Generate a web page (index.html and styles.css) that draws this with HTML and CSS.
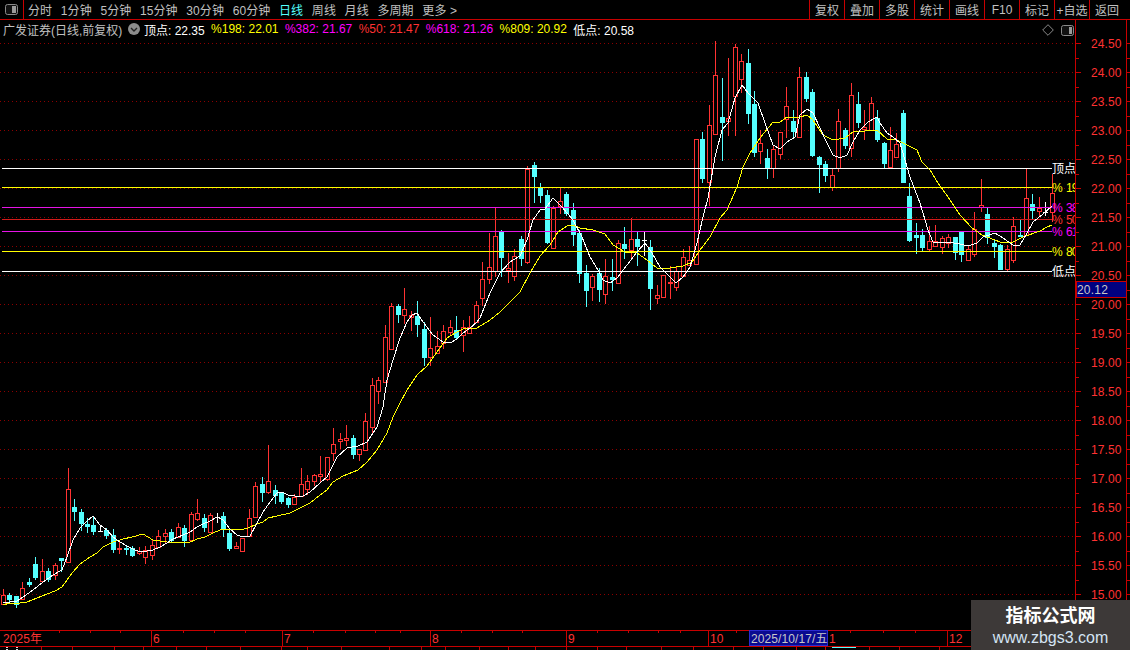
FILE: index.html
```html
<!DOCTYPE html>
<html lang="zh-CN">
<head>
<meta charset="utf-8">
<title>广发证券 日线</title>
<link rel="stylesheet" href="styles.css">
</head>
<body>
<div class="app">
  <header class="toolbar">
    <div class="panel-toggle">
      <svg class="toggle-icon" viewBox="0 0 13 11"><rect class="toggle-frame" x="0.5" y="0.5" width="12" height="10" rx="2"/><rect class="toggle-fill" x="7" y="2" width="4" height="7"/></svg>
    </div>
    <nav class="periods">
      <span class="period">分时</span>
      <span class="period">1分钟</span>
      <span class="period">5分钟</span>
      <span class="period">15分钟</span>
      <span class="period">30分钟</span>
      <span class="period">60分钟</span>
      <span class="period active">日线</span>
      <span class="period">周线</span>
      <span class="period">月线</span>
      <span class="period">多周期</span>
      <span class="period">更多 &gt;</span>
    </nav>
    <nav class="actions">
      <span class="action">复权</span>
      <span class="action">叠加</span>
      <span class="action">多股</span>
      <span class="action">统计</span>
      <span class="action">画线</span>
      <span class="action">F10</span>
      <span class="action">标记</span>
      <span class="action">+自选</span>
      <span class="action">返回</span>
    </nav>
  </header>

  <main class="stage">
    <svg id="chart" class="chart" width="1130" height="627" viewBox="0 20 1130 627"></svg>

    <div class="info">
      <span class="stock">广发证券(日线,前复权)</span>
      <svg class="drop" viewBox="0 0 12 12"><circle class="drop-disc" cx="6" cy="6" r="6"/><path class="drop-mark" d="M3 5l3 3 3-3"/></svg>
      <span class="stat white">顶点: 22.35</span>
      <span class="stat yellow">%198: 22.01</span>
      <span class="stat magenta">%382: 21.67</span>
      <span class="stat red">%50: 21.47</span>
      <span class="stat magenta">%618: 21.26</span>
      <span class="stat yellow">%809: 20.92</span>
      <span class="stat white">低点: 20.58</span>
    </div>

    <div class="corner">
      <svg class="diamond" viewBox="0 0 12 12"><path d="M6 .7L11.3 6 6 11.3.7 6z"/></svg>
      <svg class="toggle-icon" viewBox="0 0 13 11"><rect class="toggle-frame" x="0.5" y="0.5" width="12" height="10" rx="2"/><rect class="toggle-fill" x="8" y="2" width="3" height="7"/></svg>
    </div>

    <aside class="mark">
      <div class="mark-title">指标公式网</div>
      <div class="mark-url">www.zbgs3.com</div>
    </aside>
  </main>

  <footer id="tabs" class="tabs"></footer>
</div>
<script src="chart.js"></script>
</body>
</html>
```

FILE: styles.css
```css
* { box-sizing: border-box; }
html, body { margin: 0; padding: 0; background: #000; }
body { font-family: "Liberation Sans", "Noto Sans CJK SC", sans-serif; font-size: 12px; color: #c0c0c0; }
.app { width: 1130px; height: 650px; display: flex; flex-direction: column; overflow: hidden; background: #000; }

.toolbar { height: 20px; flex: none; display: flex; align-items: stretch; border-bottom: 1px solid #c80000; }
.panel-toggle { width: 24px; flex: none; display: flex; align-items: center; padding-left: 5px; border-right: 1px solid #c80000; }
.toggle-icon { width: 13px; height: 11px; display: block; }
.toggle-frame { fill: #111; stroke: #8a8a8a; }
.toggle-fill { fill: #9a9a9a; }
.periods { display: flex; align-items: center; padding-left: 4px; white-space: nowrap; }
.period { margin-right: 8.6px; letter-spacing: .1px; }
.period.active { color: #54ffff; }
.actions { margin-left: auto; padding-right: 6px; display: flex; }
.action { width: 35px; border-left: 1px solid #c80000; display: flex; align-items: center; justify-content: center; white-space: nowrap; }

.stage { position: relative; height: 627px; flex: none; }
.chart { display: block; }
.chart text { font-family: "Liberation Sans", "Noto Sans CJK SC", sans-serif; font-size: 12px; }

.grid { stroke: #8c0000; stroke-width: 1; stroke-dasharray: 1 3; }
.rule { stroke: #c80000; stroke-width: 1; }
.wick-up { stroke: #ff3232; }
.wick-down { stroke: #54ffff; }
.wick-flat { stroke: #fff; }
.body-up { fill: #000; stroke: #ff3232; }
.body-down { fill: #54ffff; stroke: #54ffff; }
.ma { fill: none; stroke-width: 1; shape-rendering: crispEdges; }
.ma-fast { stroke: #fff; }
.ma-slow { stroke: #ffff00; }
.fib { stroke-width: 1; }
.stroke-white { stroke: #fff; }
.stroke-yellow { stroke: #ffff00; }
.stroke-magenta { stroke: #e614e6; }
.stroke-red { stroke: #d01c1c; }
.chart .label-white { fill: #fff; }
.chart .label-yellow { fill: #ffff00; letter-spacing: -1px; word-spacing: 2px; }
.chart .label-magenta { fill: #ff00ff; letter-spacing: -1px; word-spacing: 2px; }
.chart .label-red { fill: #ff3232; letter-spacing: -1px; word-spacing: 2px; }
.axis-back { fill: #000; }
.chart .axis-text { fill: #ff3232; letter-spacing: .1px; }
.last-box { fill: #000080; stroke: #c80000; }
.chart .last-text { fill: #c8c8c8; letter-spacing: .2px; }
.date-box { fill: #0a0a90; stroke: #2a2ad0; }
.chart .date-text { fill: #c8c8c8; letter-spacing: .1px; }

.info { position: absolute; left: 3px; top: 0; height: 18px; display: flex; align-items: center; white-space: nowrap; }
.stock { color: #c0c0c0; width: 125px; }
.drop { width: 12px; height: 12px; flex: none; margin-right: 4px; }
.drop-disc { fill: #8c8c8c; }
.drop-mark { fill: none; stroke: #222; stroke-width: 1.4; }
.stat { margin-right: 6.4px; }
.white { color: #fff; }
.yellow { color: #ffff00; }
.magenta { color: #ff00ff; }
.red { color: #ff3232; }

.corner { position: absolute; left: 1042px; top: 4px; display: flex; align-items: center; gap: 7px; }
.diamond { width: 12px; height: 12px; display: block; }
.diamond path { fill: none; stroke: #8a8a8a; }

.mark { position: absolute; left: 971px; top: 580px; width: 159px; height: 50px; background: #3d3938; text-align: center; z-index: 2; }
.mark-title { color: #fff; font-size: 18px; font-weight: 700; line-height: 24px; margin-top: 4px; }
.mark-url { color: #d4e4f4; font-size: 16px; line-height: 19px; }

.tabs { height: 3px; flex: none; display: flex; overflow: hidden; border-top: 0; }
.tab { flex: none; height: 3px; border-right: 1px solid #c80000; overflow: hidden; }
.tab span { display: block; margin-top: -1px; height: 3px; width: 12px; margin-left: 6px; border-left: 2px dotted #ddd; border-right: 2px dotted #ddd; }
.tab.lit span { width: 24px; border: 0; border-top: 2px solid #54ffff; }
```

FILE: chart.js
```js
// Daily bars as [high, bodyTop, bodyBottom, low, type] in pixel rows of the price scale.
// type: u = up (hollow red), d = down (solid cyan), f = flat (white cross)
var bars = [
[589,595,604,604,'u'],[593,595,599,603,'d'],[596,596,604,607,'d'],[582,588,599,599,'u'],[578,582,584,586,'d'],
[557,564,577,579,'d'],[559,571,581,581,'u'],[568,571,579,581,'d'],[563,565,575,579,'u'],[558,558,560,571,'d'],
[468,489,562,562,'u'],[499,507,511,520,'d'],[509,512,523,530,'d'],[518,524,526,532,'d'],[516,525,531,534,'d'],
[526,531,531,531,'f'],[528,530,535,538,'d'],[529,535,549,552,'d'],[542,548,549,553,'u'],[545,548,549,554,'d'],
[546,548,555,556,'d'],[547,551,553,554,'u'],[546,550,557,563,'u'],[540,545,555,559,'u'],[530,536,547,547,'u'],
[529,533,536,542,'u'],[529,532,540,541,'d'],[523,527,537,537,'u'],[525,528,540,546,'d'],[512,514,540,540,'u'],
[499,513,519,520,'u'],[514,518,527,531,'d'],[513,515,532,532,'u'],[513,517,517,522,'f'],[512,516,528,536,'d'],
[529,533,548,550,'d'],[542,546,548,548,'u'],[538,538,551,551,'u'],[509,518,536,536,'u'],[482,486,517,517,'u'],
[477,484,492,501,'d'],[445,481,492,493,'u'],[485,490,495,503,'d'],[492,493,501,503,'d'],[497,498,504,507,'d'],
[494,497,504,504,'u'],[468,484,496,496,'u'],[475,481,489,494,'u'],[474,475,481,485,'u'],[456,474,476,482,'u'],
[457,457,479,480,'u'],[428,444,453,460,'u'],[433,439,441,448,'u'],[425,438,440,445,'u'],[435,438,454,458,'d'],
[449,449,454,460,'u'],[413,421,450,450,'u'],[378,385,427,432,'u'],[377,380,391,403,'u'],[325,337,382,382,'u'],
[303,306,349,349,'u'],[304,306,314,322,'d'],[288,309,315,323,'u'],[311,315,317,330,'u'],[301,316,324,336,'d'],
[322,329,357,365,'d'],[317,348,357,365,'u'],[331,346,353,353,'u'],[325,331,343,348,'u'],[320,327,332,334,'u'],
[316,330,337,339,'d'],[320,327,335,351,'u'],[316,327,333,333,'u'],[301,305,322,322,'u'],[262,279,298,305,'u'],
[233,267,279,283,'u'],[208,236,271,276,'u'],[230,232,257,276,'d'],[253,268,270,282,'u'],[249,256,276,280,'u'],
[236,239,258,265,'d'],[166,169,262,263,'u'],[162,165,176,202,'d'],[183,187,195,202,'d'],[190,195,242,243,'d'],
[206,208,248,248,'u'],[188,201,206,213,'u'],[192,194,213,215,'d'],[203,210,234,245,'d'],[230,233,273,282,'d'],
[265,273,290,306,'d'],[274,276,287,300,'u'],[268,273,289,301,'d'],[259,276,294,303,'u'],[259,277,279,290,'d'],
[240,243,283,283,'u'],[227,244,248,258,'d'],[218,239,250,258,'u'],[232,239,246,265,'d'],[232,240,240,255,'f'],
[240,247,288,309,'d'],[285,295,298,303,'u'],[275,275,297,297,'u'],[266,282,283,298,'u'],[266,271,287,290,'u'],
[249,257,276,276,'u'],[246,260,265,265,'u'],[139,139,264,264,'u'],[132,139,178,182,'d'],[105,125,182,205,'u'],
[41,75,134,134,'u'],[78,117,122,160,'d'],[58,118,121,135,'u'],[44,47,96,135,'u'],[54,61,79,92,'u'],
[49,63,113,123,'d'],[91,104,152,156,'d'],[130,143,151,163,'u'],[149,158,168,178,'d'],[146,149,168,177,'u'],
[132,132,154,158,'u'],[87,106,119,137,'u'],[110,121,131,137,'d'],[67,77,137,137,'u'],[72,77,98,101,'d'],
[89,92,155,156,'d'],[156,157,164,192,'d'],[161,164,175,181,'d'],[169,175,187,190,'u'],[109,121,168,171,'u'],
[128,130,145,148,'d'],[83,95,148,156,'u'],[92,104,122,127,'d'],[110,127,129,139,'u'],[97,103,130,130,'u'],
[110,118,139,141,'d'],[142,143,163,168,'d'],[127,150,167,167,'u'],[133,144,157,157,'u'],[110,113,182,182,'d'],
[183,196,240,241,'d'],[223,235,237,253,'d'],[229,235,247,251,'d'],[226,241,249,251,'u'],[225,241,246,246,'u'],
[236,238,247,253,'u'],[234,237,243,247,'u'],[237,237,252,259,'d'],[232,232,254,261,'d'],[245,249,260,260,'u'],
[212,229,254,256,'u'],[179,205,207,211,'u'],[208,214,237,243,'d'],[240,243,246,257,'d'],[244,245,269,269,'d'],
[245,249,269,271,'u'],[217,226,260,262,'u'],[220,235,236,236,'d'],[169,198,235,235,'u'],[194,204,210,219,'d'],
[197,208,211,215,'u'],[202,212,212,215,'f'],[174,193,212,221,'u']
];

var maFast = [[3,602],[10,602],[17,601],[23,597],[33,590],[43,582],[53,575],[62,570],[67,557],[73,540],[80,528],[87,521],[93,516],[100,525],[107,530],[113,537],[120,542],[127,546],[133,549],[140,552],[147,551],[153,550],[160,547],[167,543],[173,539],[183,535],[190,532],[197,527],[203,524],[210,521],[217,517],[223,520],[230,529],[237,535],[243,537],[250,536],[257,523],[263,512],[270,502],[277,493],[282,492],[288,495],[295,496],[303,496],[310,492],[320,483],[327,477],[337,457],[347,448],[358,446],[367,442],[377,427],[383,407],[387,380],[393,360],[400,338],[407,322],[412,315],[417,313],[423,322],[433,335],[443,342],[450,343],[457,339],[463,333],[470,328],[477,322],[480,318],[490,293],[500,273],[510,262],[520,256],[527,240],[533,220],[540,210],[545,209],[553,198],[562,207],[573,220],[582,237],[590,257],[598,270],[603,280],[610,283],[617,278],[627,265],[637,252],[645,243],[652,253],[660,267],[670,277],[676,283],[683,277],[690,267],[697,243],[703,217],[708,198],[715,157],[722,130],[728,123],[735,98],[742,85],[748,93],[758,103],[765,123],[773,145],[780,149],[787,142],[795,137],[800,115],[807,109],[813,113],[820,128],[827,143],[833,155],[840,158],[847,155],[853,142],[860,130],[868,122],[877,117],[880,123],[887,133],[893,137],[900,143],[910,177],[920,203],[928,230],[933,242],[947,242],[960,244],[968,246],[977,243],[983,237],[995,233],[1003,238],[1013,245],[1020,245],[1027,233],[1033,222],[1043,214],[1052,206]];

var maSlow = [[3,605],[10,603],[20,603],[27,602],[37,598],[47,594],[55,591],[62,587],[67,580],[72,573],[80,564],[90,557],[97,553],[103,547],[113,542],[123,539],[132,537],[143,534],[148,537],[153,540],[167,542],[188,543],[197,539],[205,537],[213,533],[220,530],[230,529],[240,530],[248,528],[257,524],[263,522],[268,518],[277,516],[290,513],[300,508],[310,503],[320,495],[327,490],[333,482],[343,476],[358,470],[367,462],[377,450],[387,433],[393,417],[400,403],[407,390],[417,375],[427,366],[437,352],[447,338],[457,332],[463,329],[477,328],[490,320],[500,312],[520,292],[530,273],[540,256],[550,245],[558,232],[567,226],[573,225],[580,228],[593,230],[605,234],[613,245],[625,252],[637,253],[647,260],[657,268],[670,268],[683,266],[692,262],[700,250],[710,237],[720,218],[727,210],[737,187],[743,167],[750,153],[760,138],[773,122],[780,122],[787,117],[800,117],[807,115],[813,120],[823,135],[833,140],[845,138],[853,132],[877,130],[887,139],[897,140],[907,145],[917,150],[922,162],[930,170],[938,183],[948,197],[960,215],[972,228],[982,235],[1000,242],[1013,242],[1023,237],[1040,231],[1047,227],[1052,225]];

var fibs = [
  [168,'white','顶点'],[187,'yellow','% 19'],[207,'magenta','% 38'],[219,'red','% 50'],
  [231,'magenta','% 61'],[251,'yellow','% 80'],[271,'white','低点']
];

var out = [];
function line(x1, y1, x2, y2, cls) {
  out.push('<line x1="' + x1 + '" y1="' + y1 + '" x2="' + x2 + '" y2="' + y2 + '" class="' + cls + '"/>');
}
function text(x, y, s, cls) {
  out.push('<text x="' + x + '" y="' + y + '" class="' + cls + '">' + s + '</text>');
}
function priceY(p) { return Math.floor(43.5 + 58 * (24.5 - p)); }

// grid lines every 0.50
for (var p = 24.5; p >= 14.99; p -= 0.5) {
  var gy = priceY(p) + 0.5;
  line(0, gy, 1075, gy, 'grid');
}

// candles
bars.forEach(function (b, i) {
  var x = Math.floor(3.3 + 6.476 * i);
  var cx = x + 0.5;
  if (b[4] === 'f') {
    line(cx, b[0], cx, b[3] + 1, 'wick-flat');
    line(x - 2, b[1] + 0.5, x + 3, b[1] + 0.5, 'wick-flat');
    return;
  }
  var up = b[4] === 'u';
  line(cx, b[0], cx, b[3] + 1, up ? 'wick-up' : 'wick-down');
  out.push('<rect x="' + (x - 1.5) + '" y="' + (b[1] + 0.5) + '" width="4" height="' +
    Math.max(b[2] - b[1], 1) + '" class="' + (up ? 'body-up' : 'body-down') + '"/>');
});

// moving averages
function poly(pts, cls) {
  out.push('<polyline class="ma ' + cls + '" points="' + pts.map(function (q) { return q.join(','); }).join(' ') + '"/>');
}

// retracement levels
fibs.forEach(function (f) {
  line(2, f[0] + 0.5, 1052, f[0] + 0.5, 'fib stroke-' + f[1]);
  text(1052, f[0] + 5, f[2], 'label-' + f[1]);
});

poly(maSlow, 'ma-slow');
poly(maFast, 'ma-fast');

// price axis
out.push('<rect x="1076" y="20" width="54" height="610" class="axis-back"/>');
line(1075.5, 20, 1075.5, 630, 'rule');
line(1126.5, 20, 1126.5, 630, 'rule');
for (var k = 0; k <= 38; k++) {
  var ty = Math.floor(43.5 + 14.5 * k) + 0.5;
  if (ty > 630) break;
  line(1076, ty, k % 2 ? 1079 : 1081, ty, 'rule');
  line(1127, ty, 1130, ty, 'rule');
}
for (var q = 24.5; q >= 14.99; q -= 0.5) {
  text(1091, priceY(q) + 5, q.toFixed(2), 'axis-text');
}
out.push('<rect x="1076.5" y="281.5" width="50" height="16" class="last-box"/>');
text(1077, 294, '20.12', 'last-text');

// date axis
line(0, 630.5, 1130, 630.5, 'rule');
line(0, 646.5, 1130, 646.5, 'rule');
[59,90,120,183,214,245,313,345,375,400,461,492,522,597,628,658,680,736,768,850,883,915,978,1010,1040].forEach(function (x) {
  line(x + 0.5, 631, x + 0.5, 633, 'rule');
});
[[151,'6'],[282,'7'],[430,'8'],[566,'9'],[708,'10'],[827,'1'],[947,'12']].forEach(function (m) {
  line(m[0] + 0.5, 631, m[0] + 0.5, 646, 'rule');
  text(m[0] + 2, 643, m[1], 'axis-text');
});
text(3, 643, '2025年', 'axis-text');
out.push('<rect x="749.5" y="630.5" width="78" height="15" class="date-box"/>');
text(751, 643, '2025/10/17/五', 'date-text');

document.getElementById('chart').innerHTML = out.join('');

// tab strip along the bottom edge
var seps = [42,73,115,144,177,207,241,282,308,342,390,422,446,480,509,536,567,598,627,662,694,734,764,797,826,870,900,940];
var prev = 0;
var html = seps.map(function (s, i) {
  var w = s - prev;
  prev = s;
  var cls = i === 0 ? 'tab has' : (s === 870 ? 'tab lit' : 'tab');
  return '<div class="' + cls + '" style="width:' + w + 'px">' + (i === 0 || s === 870 ? '<span></span>' : '') + '</div>';
}).join('');
document.getElementById('tabs').innerHTML = html;
```
